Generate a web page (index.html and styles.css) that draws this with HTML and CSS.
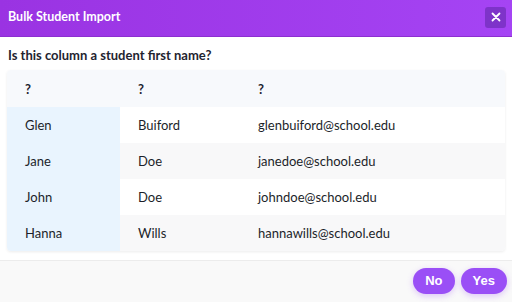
FILE: index.html
```html
<!DOCTYPE html>
<html lang="en">
<head>
  <meta charset="UTF-8">
  <meta name="viewport" content="width=device-width, initial-scale=1.0">
  <title>Bulk Student Import</title>
  <link rel="stylesheet" href="styles.css">
</head>
<body>
  <div class="modal">
    <header class="modal-header">
      <h1>Bulk Student Import</h1>
      <button type="button" class="close-btn" aria-label="Close">
        <svg width="10" height="10" viewBox="0 0 10 10">
          <path d="M1.5 1.5 L8.5 8.5 M8.5 1.5 L1.5 8.5" stroke="#fff" stroke-width="1.8" stroke-linecap="round"/>
        </svg>
      </button>
    </header>

    <div class="modal-body">
      <p class="question">Is this column a student first name?</p>
      <table class="preview">
        <thead>
          <tr>
            <th class="col-first">?</th>
            <th class="col-last">?</th>
            <th>?</th>
          </tr>
        </thead>
        <tbody>
          <tr>
            <td class="col-first">Glen</td>
            <td>Buiford</td>
            <td>glenbuiford@school.edu</td>
          </tr>
          <tr>
            <td class="col-first">Jane</td>
            <td>Doe</td>
            <td>janedoe@school.edu</td>
          </tr>
          <tr>
            <td class="col-first">John</td>
            <td>Doe</td>
            <td>johndoe@school.edu</td>
          </tr>
          <tr>
            <td class="col-first">Hanna</td>
            <td>Wills</td>
            <td>hannawills@school.edu</td>
          </tr>
        </tbody>
      </table>
    </div>

    <footer class="modal-footer">
      <button type="button" class="btn">No</button>
      <button type="button" class="btn">Yes</button>
    </footer>
  </div>
</body>
</html>
```

FILE: styles.css
```css
* {
  margin: 0;
  padding: 0;
  box-sizing: border-box;
}

body {
  font-family: Lato, "Noto Sans", sans-serif;
  color: #1f2430;
  background: #fff;
}

.modal {
  width: 512px;
  height: 302px;
  display: flex;
  flex-direction: column;
}

.modal-header {
  height: 38px;
  background: linear-gradient(90deg, #9a33e2 0%, #a544f4 100%);
  border-bottom: 1px solid #8c2fd0;
  display: flex;
  align-items: center;
  justify-content: space-between;
  padding: 0 6px 0 8px;
}

.modal-header h1 {
  font-size: 12.5px;
  font-weight: 700;
  color: #fff;
  margin-top: -3px;
}

.close-btn {
  width: 21px;
  height: 21px;
  border: none;
  border-radius: 3px;
  background: #7e33c9;
  display: flex;
  align-items: center;
  justify-content: center;
  margin-top: -2px;
  cursor: pointer;
}

.modal-body {
  flex: 1;
  padding: 10px 7px 9px 7px;
}

.question {
  font-size: 13px;
  font-weight: 700;
  padding-left: 1px;
  margin-bottom: 7px;
}

.preview {
  width: 498px;
  border-collapse: collapse;
  font-size: 13px;
  border-radius: 4px;
  overflow: hidden;
  box-shadow: 0 1px 3px rgba(0, 0, 0, 0.08);
}

.preview th,
.preview td {
  text-align: left;
  padding: 0 18px;
  height: 36px;
}

.preview th {
  font-weight: 700;
  height: 37px;
  background: #f7f9fc;
}

.preview .col-first {
  width: 113px;
}

.preview .col-last {
  width: 120px;
}

.preview td {
  font-weight: 400;
  color: #1c1f2a;
}

.preview tbody tr:nth-child(even) td {
  background: #f8f8f9;
}

.preview tbody tr td.col-first,
.preview tbody tr:nth-child(even) td.col-first {
  background: #e9f4fe;
}

.modal-footer {
  height: 43px;
  background: #f9f9f9;
  border-top: 1px solid #ececec;
  display: flex;
  justify-content: flex-end;
  align-items: center;
  gap: 6px;
  padding: 0 5px 2px 0;
}

.btn {
  height: 26px;
  padding: 0 12px;
  border: none;
  border-radius: 13px;
  background: #9a4ff6;
  color: #fff;
  font-family: "Liberation Sans", Arial, sans-serif;
  font-size: 13px;
  font-weight: 700;
  box-shadow: 0 2px 6px rgba(154, 79, 246, 0.3);
  cursor: pointer;
}
```
